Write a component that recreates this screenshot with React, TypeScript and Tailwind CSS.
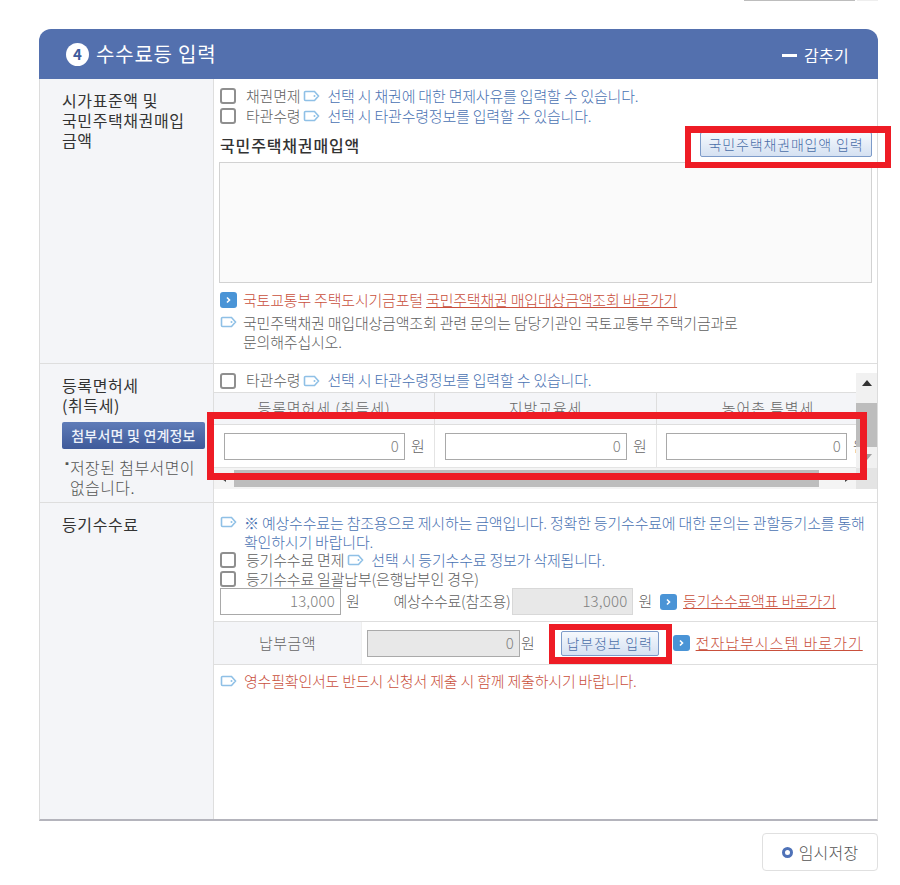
import React from "react";

const F = '"Noto Sans CJK KR","Noto Sans",sans-serif';

function Tag() {
  return (
    <svg width="17" height="12" viewBox="0 0 17 12" className="shrink-0">
      <path d="M1.5 2.5a1 1 0 0 1 1-1h9l4 4.5-4 4.5h-9a1 1 0 0 1-1-1z" fill="#fff" stroke="#8fc0e6" strokeWidth="1.6" />
      <circle cx="11.5" cy="6" r="1" fill="#8fc0e6" />
    </svg>
  );
}
function Go() {
  return (
    <svg width="17" height="16" viewBox="0 0 17 16" className="shrink-0">
      <rect width="17" height="16" rx="3" fill="#4a94d6" />
      <path d="M7 5.5l2.5 2.5-2.5 2.5" fill="none" stroke="#fff" strokeWidth="1.6" />
    </svg>
  );
}
function Box() {
  return <span className="block w-[16px] h-[16px] shrink-0 rounded-[3px] border-2 border-[#8f8f8f] bg-white" />;
}
function Btn({ children, className = "" }: { children: React.ReactNode; className?: string }) {
  return (
    <span className={"flex items-center justify-center h-[25px] rounded-[2px] border border-[#7d9bc9] bg-gradient-to-b from-[#f6f9fd] to-[#d5e1f2] text-[14px] text-[#4a6ea8] tracking-[0.85px] " + className}>
      {children}
    </span>
  );
}
function Money({ w, value = "0", cls = "bg-white" }: { w: string; value?: string; cls?: string }) {
  return (
    <span className={"flex items-center justify-end h-[27px] pr-[5px] border border-[#a9a9a9] text-[15px] text-[#808080] tracking-[0.2px] shrink-0 " + w + " " + cls}>{value}</span>
  );
}

export default function App() {
  return (
    <div className="relative w-[900px] h-[885px] bg-white overflow-hidden text-[15px] tracking-[-0.2px] text-[#5f5f5f] font-light" style={{ fontFamily: F }}>
      <div className="flex justify-end gap-[2px] pr-[22px] h-[1px]">
        <div className="w-[111px] bg-[#bdbdbd]" />
        <div className="w-[21px] bg-[#eeeeee]" />
      </div>

      <div className="ml-[39px] mt-[28px] w-[839px]">
        <div className="flex items-center justify-between h-[50px] pl-[27px] pr-[29px] rounded-t-[12px] bg-[#5370ae] text-white">
          <div className="flex items-center gap-[7px]">
            <span className="flex items-center justify-center w-[23px] h-[23px] rounded-full bg-white text-[#3f5c9c] text-[15px] font-bold tracking-normal">4</span>
            <span className="text-[20px] font-normal tracking-[0.8px]">수수료등 입력</span>
          </div>
          <div className="flex items-center gap-[7px] text-[16px] font-normal tracking-[0.3px] mt-[2px]">
            <span className="w-[15px] h-[3px] bg-white" />
            <span>감추기</span>
          </div>
        </div>

        <div className="border-x border-[#dcdcdc] border-b-2 border-b-[#b4b4bc]">
          {/* Row 1 */}
          <div className="flex h-[285px] border-b border-[#dedede]">
            <div className="w-[174px] shrink-0 bg-[#f4f5f8] border-r border-[#dedede] pl-[22px] pt-[11px] text-[16px] font-normal leading-[20px] text-[#333] tracking-[0.6px]">
              시가표준액 및<br />국민주택채권매입<br />금액
            </div>
            <div className="flex-1 pl-[5px] pr-[5px] pt-[7px]">
              <div className="flex items-center gap-[10px] h-[20px] pl-[1px]">
                <Box />
                <span className="flex items-center gap-[3px]">
                  <span>채권면제</span>
                  <Tag />
                  <span className="ml-[4px] text-[#4a72b2]">선택 시 채권에 대한 면제사유를 입력할 수 있습니다.</span>
                </span>
              </div>
              <div className="flex items-center gap-[10px] h-[20px] pl-[1px]">
                <Box />
                <span className="flex items-center gap-[3px]">
                  <span>타관수령</span>
                  <Tag />
                  <span className="ml-[4px] text-[#4a72b2]">선택 시 타관수령정보를 입력할 수 있습니다.</span>
                </span>
              </div>
              <div className="flex items-center justify-between h-[29px] mt-[4px] mb-[3px]">
                <span className="font-medium text-[#333] text-[16px] tracking-[0.85px] pl-[1px]">국민주택채권매입액</span>
                <Btn className="w-[172px]">국민주택채권매입액 입력</Btn>
              </div>
              <div className="h-[121px] border border-[#d2d2d2] bg-[#fafafa]" />
              <div className="flex items-center gap-[6px] mt-[7px] h-[20px] pl-[1px]">
                <Go />
                <span className="text-[#c9503c]">국토교통부 주택도시기금포털 <span className="underline">국민주택채권 매입대상금액조회 바로가기</span></span>
              </div>
              <div className="flex gap-[6px] mt-[3px] leading-[19px] pl-[1px]">
                <span className="mt-[3px]"><Tag /></span>
                <span>국민주택채권 매입대상금액조회 관련 문의는 담당기관인 국토교통부 주택기금과로<br />문의해주십시오.</span>
              </div>
            </div>
          </div>

          {/* Row 2 */}
          <div className="flex h-[139px] border-b border-[#dedede]">
            <div className="w-[174px] shrink-0 bg-[#f4f5f8] border-r border-[#dedede] pl-[22px] pt-[11px] text-[#333]">
              <div className="text-[16px] font-normal leading-[20px] tracking-[0.6px]">등록면허세<br />(취득세)</div>
              <div className="mt-[7px] w-[143px] h-[27px] flex items-center justify-center rounded-[2px] bg-gradient-to-b from-[#5f7cb8] to-[#3f5a9a] text-[14px] text-[#eef2fa] font-medium tracking-[0.2px]">첨부서면 및 연계정보</div>
              <div className="flex mt-[8px] text-[#555] leading-[20px]">
                <span className="w-[8px] shrink-0 text-[10px] leading-[14px]">▪</span>
                <span className="text-[16px] tracking-[0.4px]">저장된 첨부서면이<br />없습니다.</span>
              </div>
            </div>
            <div className="relative flex-1 min-w-0 overflow-hidden">
              <div className="flex items-center gap-[10px] h-[28px] pl-[6px] pt-[5px]">
                <Box />
                <span className="flex items-center gap-[3px]">
                  <span>타관수령</span>
                  <Tag />
                  <span className="ml-[4px] text-[#4a72b2]">선택 시 타관수령정보를 입력할 수 있습니다.</span>
                </span>
              </div>
              <div className="grid grid-cols-[221px_222px_222px] text-[#666] tracking-[0.9px]">
                <div className="h-[33px] bg-[#f4f5f8] border-y border-[#dedede] border-r flex items-center justify-center">등록면허세 (취득세)</div>
                <div className="h-[33px] bg-[#f4f5f8] border-y border-[#dedede] border-r flex items-center justify-center">지방교육세</div>
                <div className="h-[33px] bg-[#f4f5f8] border-y border-[#dedede] flex items-center justify-center">농어촌 특별세</div>
                {[["w-[181px]", "ml-[10px]"], ["w-[182px]", "ml-[10px]"], ["w-[181px]", "ml-[9px]"]].map(([w, m], i) => (
                  <div key={i} className={"h-[43px] flex items-center gap-[6px] border-b border-[#e4e4e4] tracking-normal " + (i < 2 ? "border-r " : "")}>
                    <span className={m}><Money w={w} /></span>
                    <span>원</span>
                  </div>
                ))}
              </div>
              <div className="absolute right-0 top-[9px] w-[21px] h-[95px] bg-[#f1f1f1] flex flex-col items-center">
                <span className="mt-[7px] w-0 h-0 border-x-[5px] border-x-transparent border-b-[6px] border-b-[#333]" />
                <span className="mt-[17px] w-full h-[44px] bg-[#bdbdbd]" />
                <span className="mt-[7px] w-0 h-0 border-x-[5px] border-x-transparent border-t-[6px] border-t-[#a0a0a0]" />
              </div>
              <div className="absolute left-0 right-0 top-[104px] h-[21px] bg-[#f4f4f4] flex items-center">
                <span className="ml-[8px] w-0 h-0 border-y-[3px] border-y-transparent border-r-[4px] border-r-[#444]" />
                <span className="ml-[8px] w-[585px] h-[17px] bg-[#bdbdbd]" />
                <span className="ml-[26px] w-0 h-0 border-y-[3px] border-y-transparent border-l-[4px] border-l-[#444]" />
                <span className="ml-auto w-[21px] h-full bg-[#e4e4e4]" />
              </div>
            </div>
          </div>

          {/* Row 3 */}
          <div className="flex h-[316px]">
            <div className="w-[174px] shrink-0 bg-[#f4f5f8] border-r border-[#dedede] pl-[22px] pt-[11px] text-[16px] font-normal leading-[20px] text-[#333] tracking-[0.6px]">
              등기수수료
            </div>
            <div className="flex-1 min-w-0">
              <div className="pl-[6px] pr-[5px] pt-[10px] h-[118px]">
                <div className="flex gap-[7px] leading-[19px] text-[#4a72b2]">
                  <span className="mt-[3px]"><Tag /></span>
                  <span>※ 예상수수료는 참조용으로 제시하는 금액입니다. 정확한 등기수수료에 대한 문의는 관할등기소를 통해<br />확인하시기 바랍니다.</span>
                </div>
                <div className="flex items-center gap-[10px] h-[20px] -mt-[1px]">
                  <Box />
                  <span className="flex items-center gap-[3px]">
                    <span>등기수수료 면제</span>
                    <Tag />
                    <span className="ml-[4px] text-[#4a72b2]">선택 시 등기수수료 정보가 삭제됩니다.</span>
                  </span>
                </div>
                <div className="flex items-center gap-[10px] h-[18px]">
                  <Box />
                  <span>등기수수료 일괄납부(은행납부인 경우)</span>
                </div>
                <div className="flex items-center h-[27px]">
                  <Money w="w-[121px]" value="13,000" />
                  <span className="ml-[5px]">원</span>
                  <span className="ml-[34px] tracking-[-0.3px]">예상수수료(참조용)</span>
                  <Money w="w-[121px]" value="13,000" cls="bg-[#e8e8e8] border-[#d8d8d8] ml-[2px]" />
                  <span className="ml-[5px]">원</span>
                  <span className="ml-[8px]"><Go /></span>
                  <span className="ml-[6px] text-[#c9503c] underline">등기수수료액표 바로가기</span>
                </div>
              </div>
              <div className="flex h-[44px] border-y border-[#dedede]">
                <div className="w-[148px] shrink-0 bg-[#f4f5f8] border-r border-[#eeeeee] flex items-center justify-center text-[#666] tracking-[0.5px]">납부금액</div>
                <div className="flex items-center flex-1">
                  <Money w="w-[153px] ml-[5px]" cls="bg-[#e8e8e8] border-[#aaaaaa]" />
                  <span className="ml-[1px]">원</span>
                  <Btn className="w-[98px] ml-[26px]">납부정보 입력</Btn>
                  <span className="ml-[14px]"><Go /></span>
                  <span className="ml-[6px] text-[#c9503c] underline tracking-[1px]">전자납부시스템 바로가기</span>
                </div>
              </div>
              <div className="flex items-center gap-[7px] pl-[6px] mt-[6px] h-[20px] text-[#c9503c]">
                <Tag />
                <span>영수필확인서도 반드시 신청서 제출 시 함께 제출하시기 바랍니다.</span>
              </div>
            </div>
          </div>
        </div>

        <div className="flex justify-end mt-[12px]">
          <div className="flex items-center justify-center gap-[6px] w-[116px] h-[38px] rounded-[4px] border border-[#e0e0e0] bg-white text-[16px] text-[#555] tracking-[0.2px]">
            <span className="w-[11px] h-[11px] rounded-full border-[3px] border-[#4f72b8]" />
            임시저장
          </div>
        </div>
      </div>

      {/* red annotation boxes */}
      <div className="absolute left-[685px] top-[126px] w-[206px] h-[42px] border-[6px] border-t-[7px] border-[#ee1c25]" />
      <div className="absolute left-[207px] top-[412px] w-[660px] h-[68px] border-[7px] border-[#ee1c25]" />
      <div className="absolute left-[549px] top-[624px] w-[123px] h-[40px] border-[6px] border-b-[7px] border-[#ee1c25]" />
    </div>
  );
}
